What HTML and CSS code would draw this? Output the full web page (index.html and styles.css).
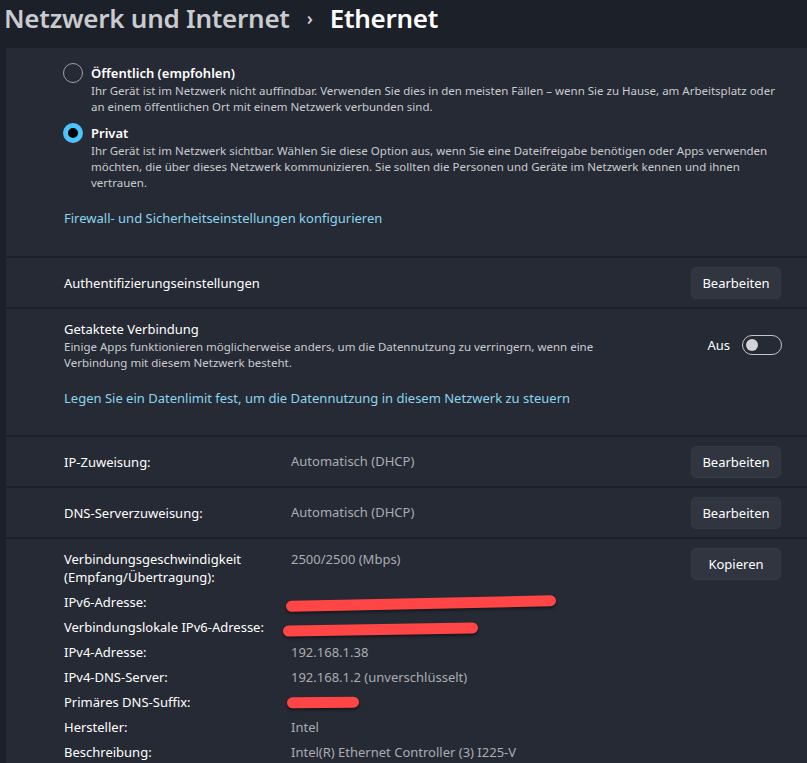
FILE: index.html
```html
<!DOCTYPE html>
<html lang="de">
<head>
<meta charset="utf-8">
<title>Ethernet</title>
<link rel="stylesheet" href="styles.css">
</head>
<body>
<header class="header">
  <h1 class="crumb"><span class="crumb-parent">Netzwerk und Internet</span><span class="crumb-sep">›</span><span class="crumb-current">Ethernet</span></h1>
</header>
<main class="cards">
  <section class="card card-profile">
    <div class="radio-row">
      <span class="radio"></span>
      <div class="radio-text">
        <div class="radio-label">Öffentlich (empfohlen)</div>
        <div class="desc">Ihr Gerät ist im Netzwerk nicht auffindbar. Verwenden Sie dies in den meisten Fällen – wenn Sie zu Hause, am Arbeitsplatz oder<br>an einem öffentlichen Ort mit einem Netzwerk verbunden sind.</div>
      </div>
    </div>
    <div class="radio-row">
      <span class="radio radio-checked"></span>
      <div class="radio-text">
        <div class="radio-label">Privat</div>
        <div class="desc">Ihr Gerät ist im Netzwerk sichtbar. Wählen Sie diese Option aus, wenn Sie eine Dateifreigabe benötigen oder Apps verwenden<br>möchten, die über dieses Netzwerk kommunizieren. Sie sollten die Personen und Geräte im Netzwerk kennen und ihnen<br>vertrauen.</div>
      </div>
    </div>
    <a class="link link-firewall" href="#">Firewall- und Sicherheitseinstellungen konfigurieren</a>
  </section>

  <section class="card card-row">
    <div class="label">Authentifizierungseinstellungen</div>
    <button class="btn">Bearbeiten</button>
  </section>

  <section class="card card-metered">
    <div class="metered-top">
      <div class="metered-text">
        <div class="label">Getaktete Verbindung</div>
        <div class="desc">Einige Apps funktionieren möglicherweise anders, um die Datennutzung zu verringern, wenn eine<br>Verbindung mit diesem Netzwerk besteht.</div>
      </div>
      <div class="toggle-wrap">
        <span class="toggle-label">Aus</span>
        <span class="toggle"><span class="knob"></span></span>
      </div>
    </div>
    <a class="link link-limit" href="#">Legen Sie ein Datenlimit fest, um die Datennutzung in diesem Netzwerk zu steuern</a>
  </section>

  <section class="card card-row">
    <div class="kv">
      <div class="label key">IP-Zuweisung:</div>
      <div class="value">Automatisch (DHCP)</div>
    </div>
    <button class="btn">Bearbeiten</button>
  </section>

  <section class="card card-row">
    <div class="kv">
      <div class="label key">DNS-Serverzuweisung:</div>
      <div class="value">Automatisch (DHCP)</div>
    </div>
    <button class="btn">Bearbeiten</button>
  </section>

  <section class="card card-props">
    <div class="props">
      <div class="key">Verbindungsgeschwindigkeit<br>(Empfang/Übertragung):</div>
      <div class="value">2500/2500 (Mbps)</div>
      <div class="key">IPv6-Adresse:</div>
      <div class="value"><span class="redact redact-1"></span></div>
      <div class="key">Verbindungslokale IPv6-Adresse:</div>
      <div class="value"><span class="redact redact-2"></span></div>
      <div class="key">IPv4-Adresse:</div>
      <div class="value">192.168.1.38</div>
      <div class="key">IPv4-DNS-Server:</div>
      <div class="value">192.168.1.2 (unverschlüsselt)</div>
      <div class="key">Primäres DNS-Suffix:</div>
      <div class="value"><span class="redact redact-3"></span></div>
      <div class="key">Hersteller:</div>
      <div class="value">Intel</div>
      <div class="key">Beschreibung:</div>
      <div class="value">Intel(R) Ethernet Controller (3) I225-V</div>
    </div>
    <button class="btn btn-copy">Kopieren</button>
  </section>
</main>
</body>
</html>
```

FILE: styles.css
```css
* { box-sizing: border-box; }

html, body {
  margin: 0;
  padding: 0;
  background: #1c2029;
  overflow: hidden;
}

body {
  font-family: "Noto Sans", "Open Sans", sans-serif;
  color: #ffffff;
  font-size: 13px;
}

.header {
  height: 48px;
  padding-left: 4px;
  display: flex;
  align-items: flex-start;
}

.crumb {
  margin: 0;
  font-size: 26px;
  font-weight: 600;
  line-height: 36px;
  letter-spacing: -0.25px;
  white-space: nowrap;
}

.crumb-parent { color: #c9cbcf; }
.crumb-sep {
  color: #c9cbcf;
  font-size: 18px;
  margin: 0 17px 0 17px;
  position: relative;
  top: -3px;
}
.crumb-current { color: #ffffff; }

.cards {
  margin-left: 6px;
  display: flex;
  flex-direction: column;
  gap: 2px;
  width: 801px;
}

.card {
  background: #262a34;
  padding-left: 58px;
  padding-right: 26px;
}

.card-profile {
  padding-top: 15px;
  padding-bottom: 28px;
  display: flex;
  flex-direction: column;
}

.radio-row {
  display: flex;
  gap: 8px;
  margin-bottom: 8px;
}

.radio {
  flex: none;
  width: 20px;
  height: 20px;
  border-radius: 50%;
  border: 1px solid #9ea0a4;
  margin-left: -1px;
}

.radio-checked {
  border: 5px solid #4cc2ff;
  background: #000;
}

.radio-label {
  font-weight: 600;
  line-height: 20px;
  font-size: 13px;
}

.desc {
  font-size: 11.5px;
  line-height: 16px;
  color: #c9cbd0;
  white-space: nowrap;
}

.link {
  color: #8bd6ee;
  text-decoration: none;
  line-height: 20px;
  font-size: 13px;
  align-self: flex-start;
}

.link-firewall { margin-top: 9px; }

.card-row {
  height: 49px;
  display: flex;
  align-items: center;
  justify-content: space-between;
}

.label {
  line-height: 20px;
}

.btn {
  font-family: inherit;
  font-size: 13px;
  color: #ffffff;
  background: #31353f;
  border: 1px solid #353944;
  border-radius: 5px;
  width: 90px;
  height: 32px;
  padding: 0;
  cursor: pointer;
}

.card-metered {
  height: 126px;
  padding-top: 10px;
  display: flex;
  flex-direction: column;
}

.metered-top {
  display: flex;
  align-items: center;
  justify-content: space-between;
}

.toggle-wrap {
  display: flex;
  align-items: center;
  gap: 12px;
  margin-right: -1px;
}

.toggle-label { line-height: 20px; }

.toggle {
  width: 40px;
  height: 20px;
  border: 1px solid #c4c6ca;
  border-radius: 10px;
  display: flex;
  align-items: center;
  padding-left: 3px;
}

.knob {
  width: 12px;
  height: 12px;
  border-radius: 50%;
  background: #d2d3d6;
}

.link-limit { margin-top: 17px; }

.kv {
  display: grid;
  grid-template-columns: 227px auto;
}

.key {
  color: #ffffff;
}

.value {
  color: #aaadb2;
}

.card-props {
  padding-top: 11px;
  padding-bottom: 20px;
  display: flex;
  justify-content: space-between;
  align-items: flex-start;
}

.props {
  display: grid;
  grid-template-columns: 227px auto;
  row-gap: 7px;
  line-height: 18px;
}

.btn-copy { margin-top: -2px; }

.redact {
  display: inline-block;
  height: 11px;
  border-radius: 6px;
  background: #ff4545;
  box-shadow: 0 2px 3px rgba(0, 0, 0, 0.45);
  vertical-align: middle;
}

.redact-1 { width: 270px; transform: translate(-5px, 0) rotate(-1.2deg); }
.redact-2 { width: 195px; transform: translate(-8px, 1px) rotate(-1deg); }
.redact-3 { width: 72px; transform: translate(-4px, -1px) rotate(-0.5deg); }
```
